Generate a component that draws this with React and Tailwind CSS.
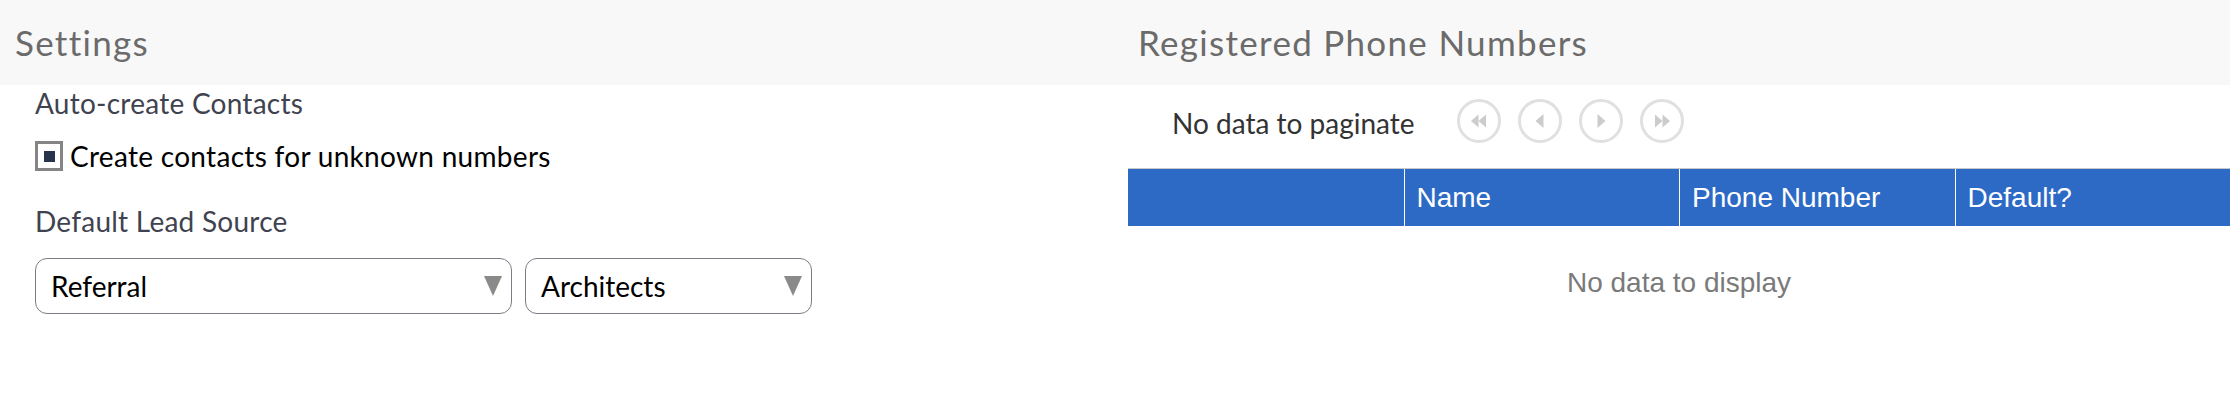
import React from 'react';

const bodyFont = { fontFamily: 'Lato, "Open Sans", sans-serif' };

const PageButton = ({ dir, double }) => (
  <button
    type="button"
    disabled
    className="w-[44px] h-[44px] rounded-full border-[3px] border-[#e0e0e0] bg-white flex items-center justify-center"
  >
    <svg width="20" height="16" viewBox="0 0 20 16" fill="#cccccc">
      {dir === 'left' ? (
        double ? (
          <>
            <polygon points="2,8 9.5,1.5 9.5,14.5" />
            <polygon points="9.5,8 17,1.5 17,14.5" />
          </>
        ) : (
          <polygon points="5.5,8 13.5,1 13.5,15" />
        )
      ) : double ? (
        <>
          <polygon points="3,1.5 10.5,8 3,14.5" />
          <polygon points="10.5,1.5 18,8 10.5,14.5" />
        </>
      ) : (
        <polygon points="6.5,1 14.5,8 6.5,15" />
      )}
    </svg>
  </button>
);

const Select = ({ value, width }) => (
  <div
    className={`${width} h-[56px] rounded-[12px] border border-[#7c7c86] bg-white flex items-center justify-between pl-[15px] pr-[9px]`}
  >
    <span className="text-[28px] leading-[32px] text-black">{value}</span>
    <svg width="18" height="20" viewBox="0 0 18 20">
      <polygon points="0,0 18,0 9,20" fill="#8a8a8a" />
    </svg>
  </div>
);

export default function App() {
  return (
    <div className="flex w-full min-h-[418px] bg-white" style={bodyFont}>
      {/* Settings */}
      <div className="w-[1115px] shrink-0">
        <div className="h-[85px] bg-[#f8f8f8] flex items-center pl-[15px] text-[35px] tracking-[1.3px] text-[#6b6b6b]">
          Settings
        </div>
        <div className="pl-[35px]">
          <div className="mt-[2px] text-[28px] leading-[32px] tracking-[0.25px] text-[#3f4350]">
            Auto-create Contacts
          </div>
          <div className="mt-[21px] flex items-center gap-[7px]">
            <div className="w-[28px] h-[30px] border-[3px] border-[#858585] bg-white flex items-center justify-center">
              <div className="w-[11px] h-[11px] bg-[#27344a]" />
            </div>
            <span className="text-[28px] leading-[32px] tracking-[0.3px] text-black">
              Create contacts for unknown numbers
            </span>
          </div>
          <div className="mt-[33px] text-[28px] leading-[32px] tracking-[0.25px] text-[#3f4350]">
            Default Lead Source
          </div>
          <div className="mt-[21px] flex gap-[13px]">
            <Select value="Referral" width="w-[477px]" />
            <Select value="Architects" width="w-[287px]" />
          </div>
        </div>
      </div>

      {/* Registered Phone Numbers */}
      <div className="flex-1 min-w-0">
        <div className="h-[85px] bg-[#f8f8f8] flex items-center pl-[23px] text-[35px] tracking-[1.3px] text-[#6b6b6b]">
          Registered Phone Numbers
        </div>
        <div className="mt-[14px] pl-[57px] flex items-center h-[44px]">
          <span className="mt-[4px] text-[28px] leading-[32px] text-[#333333] mr-[42px]">No data to paginate</span>
          <div className="flex gap-[17px]">
            <PageButton dir="left" double />
            <PageButton dir="left" />
            <PageButton dir="right" />
            <PageButton dir="right" double />
          </div>
        </div>
        <div className="ml-[13px] mt-[25px]" style={{ fontFamily: '"Liberation Sans", Arial, sans-serif' }}>
          <div className="grid grid-cols-4 border-t border-[#c8c8c8] bg-[#2d6ac6] h-[58px] text-white text-[28px]">
            <div className="flex items-center pl-[12px]" />
            <div className="flex items-center pl-[12px] border-l border-white">Name</div>
            <div className="flex items-center pl-[12px] border-l border-white">Phone Number</div>
            <div className="flex items-center pl-[12px] border-l border-white">Default?</div>
          </div>
          <div className="mt-[41px] text-center text-[28px] leading-[32px] text-[#7a7a7a]">No data to display</div>
        </div>
      </div>
    </div>
  );
}
